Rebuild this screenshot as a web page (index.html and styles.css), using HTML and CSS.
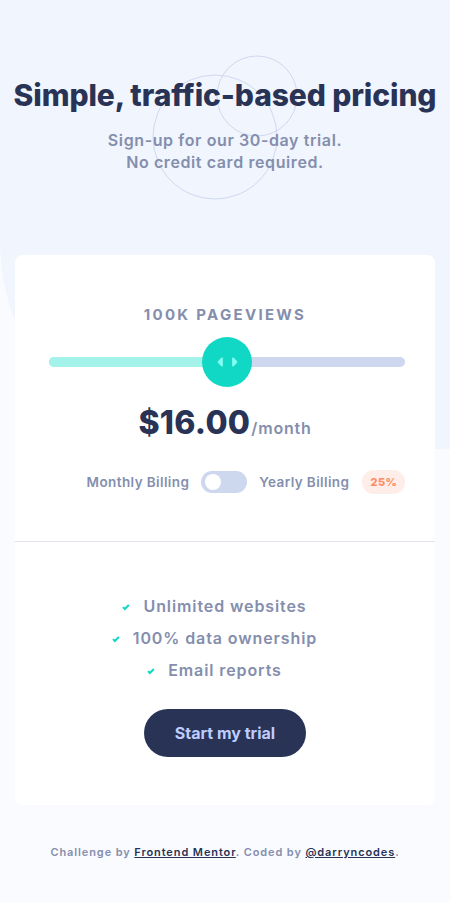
FILE: index.html
```html
<!DOCTYPE html>
<html lang="en">
<head>
<meta charset="utf-8">
<title>Interactive pricing component</title>
<link rel="stylesheet" href="styles.css">
</head>
<body>
<div class="page">
  <div class="bg-shape"></div>
  <header class="hero">
    <svg class="circles" width="160" height="160" viewBox="0 0 160 160" aria-hidden="true">
      <circle cx="65" cy="87" r="62" fill="none" stroke="#CFD8EF" stroke-width="1"/>
      <circle cx="107" cy="46" r="40" fill="none" stroke="#CFD8EF" stroke-width="1"/>
    </svg>
    <h1 class="title">Simple, traffic-based pricing</h1>
    <p class="subtitle">Sign-up for our 30-day trial.<br>No credit card required.</p>
  </header>

  <main class="card">
    <section class="card-top">
      <p class="views">100K Pageviews</p>
      <div class="slider">
        <div class="track"><div class="fill" style="width:50%"></div></div>
        <div class="thumb" style="left:50%">
          <svg width="22" height="13" viewBox="0 0 22 13"><path d="M16 2.558v7.884a1 1 0 001.735.679l3.639-3.943a1 1 0 000-1.356l-3.64-3.943A1 1 0 0016 2.558zM6 2.558v7.884a1 1 0 01-1.735.679L.626 7.178a1 1 0 010-1.356l3.64-3.943A1 1 0 016 2.558z" fill="#80FFF3" fill-rule="evenodd"/></svg>
        </div>
      </div>
      <p class="price"><span class="amount">$16.00</span><span class="per">/month</span></p>
      <div class="billing">
        <span class="bill-label">Monthly Billing</span>
        <span class="toggle"><span class="knob"></span></span>
        <span class="bill-label">Yearly Billing</span>
        <span class="badge">25%</span>
      </div>
    </section>
    <section class="card-bottom">
      <ul class="features">
        <li><svg class="check" width="9" height="8" viewBox="0 0 9 8"><path fill="none" stroke="#10D8C4" stroke-width="2" d="M1 4.134l1.866 1.867L6.804 2"/></svg>Unlimited websites</li>
        <li><svg class="check" width="9" height="8" viewBox="0 0 9 8"><path fill="none" stroke="#10D8C4" stroke-width="2" d="M1 4.134l1.866 1.867L6.804 2"/></svg>100% data ownership</li>
        <li><svg class="check" width="9" height="8" viewBox="0 0 9 8"><path fill="none" stroke="#10D8C4" stroke-width="2" d="M1 4.134l1.866 1.867L6.804 2"/></svg>Email reports</li>
      </ul>
      <button class="cta">Start my trial</button>
    </section>
  </main>

  <footer class="attribution">
    Challenge by <a href="#">Frontend Mentor</a>. Coded by <a href="#">@darryncodes</a>.
  </footer>
</div>
</body>
</html>
```
FILE: styles.css
```css
* { box-sizing: border-box; }
html, body { margin: 0; padding: 0; }
body {
  background: #FAFBFF;
  font-family: Inter, "Noto Sans", sans-serif;
  color: #848EAD;
}
.page {
  position: relative;
  min-height: 902px;
  overflow: hidden;
}
.bg-shape {
  position: absolute;
  top: 0;
  left: 0;
  width: 100%;
  height: 449px;
  background: #F1F5FE;
  border-bottom-left-radius: 196px 208px;
  z-index: 0;
}
.hero {
  position: relative;
  z-index: 1;
  text-align: center;
  padding-top: 77px;
}
.circles {
  position: absolute;
  left: 150px;
  top: 50px;
}
.title {
  position: relative;
  margin: 0;
  font-size: 30px;
  line-height: 36px;
  font-weight: 800;
  letter-spacing: -0.1px;
  color: #293356;
}
.subtitle {
  position: relative;
  margin: 16px 0 0;
  font-size: 16px;
  line-height: 22px;
  font-weight: 600;
  letter-spacing: 0.6px;
  color: #848EAD;
}
.card {
  position: relative;
  z-index: 1;
  margin: 82px 15px 0;
  background: #FFFFFF;
  border-radius: 8px;
}
.card-top {
  padding: 50px 44px 47px;
  text-align: center;
  border-bottom: 1px solid #DFE3EC;
}
.views {
  margin: 0;
  font-size: 15px;
  line-height: 20px;
  font-weight: 700;
  letter-spacing: 2.3px;
  text-transform: uppercase;
}
.slider {
  position: relative;
  margin: 12px -14px 0 -10px;
  height: 50px;
  display: flex;
  align-items: center;
}
.track {
  width: 100%;
  height: 10px;
  border-radius: 5px;
  background: #CDD7EE;
  overflow: hidden;
}
.fill {
  height: 100%;
  background: #A4F3EB;
}
.thumb {
  position: absolute;
  top: 0;
  width: 50px;
  height: 50px;
  margin-left: -25px;
  border-radius: 50%;
  background: #10D8C4;
  display: flex;
  align-items: center;
  justify-content: center;
}
.thumb svg { width: 21px; height: 12px; }
.price {
  margin: 16px 0 0;
  display: flex;
  justify-content: center;
  align-items: baseline;
  color: #293356;
}
.amount {
  font-size: 32px;
  line-height: 40px;
  font-weight: 800;
  letter-spacing: 0.3px;
}
.per {
  margin-left: 1px;
  font-size: 16px;
  font-weight: 600;
  letter-spacing: 0.8px;
  color: #848EAD;
}
.billing {
  margin: 27px -44px 0;
  padding-left: 42px;
  display: flex;
  justify-content: center;
  align-items: center;
  gap: 12px;
  white-space: nowrap;
}
.bill-label {
  font-size: 13.5px;
  font-weight: 600;
  letter-spacing: 0.4px;
}
.toggle {
  width: 46px;
  height: 22px;
  border-radius: 11px;
  background: #CDD7EE;
  display: flex;
  align-items: center;
  padding: 0 4px;
}
.knob {
  width: 16px;
  height: 16px;
  border-radius: 50%;
  background: #FFFFFF;
}
.badge {
  margin-left: 1px;
  height: 24px;
  padding: 0 8px;
  border-radius: 12px;
  background: #FEEDE8;
  color: #FF8C66;
  font-size: 11px;
  font-weight: 800;
  display: flex;
  align-items: center;
  letter-spacing: 0.5px;
}
.card-bottom {
  padding: 53px 0 48px;
  display: flex;
  flex-direction: column;
  align-items: center;
}
.features {
  list-style: none;
  margin: 0;
  padding: 0;
  display: flex;
  flex-direction: column;
  align-items: center;
  gap: 10px;
}
.features li {
  position: relative;
  font-size: 16px;
  line-height: 22px;
  font-weight: 600;
  letter-spacing: 0.9px;
}
.check {
  position: absolute;
  right: 100%;
  top: 8px;
  margin-right: 12px;
}
.cta {
  margin-top: 28px;
  width: 162px;
  height: 48px;
  border: 0;
  border-radius: 24px;
  background: #293356;
  color: #BDCCFF;
  font-family: inherit;
  font-size: 16px;
  font-weight: 700;
  cursor: pointer;
}
.attribution {
  position: relative;
  z-index: 1;
  margin-top: 40px;
  text-align: center;
  font-size: 11px;
  font-weight: 600;
  letter-spacing: 0.9px;
  color: #848EAD;
}
.attribution a {
  color: #293356;
}
```
